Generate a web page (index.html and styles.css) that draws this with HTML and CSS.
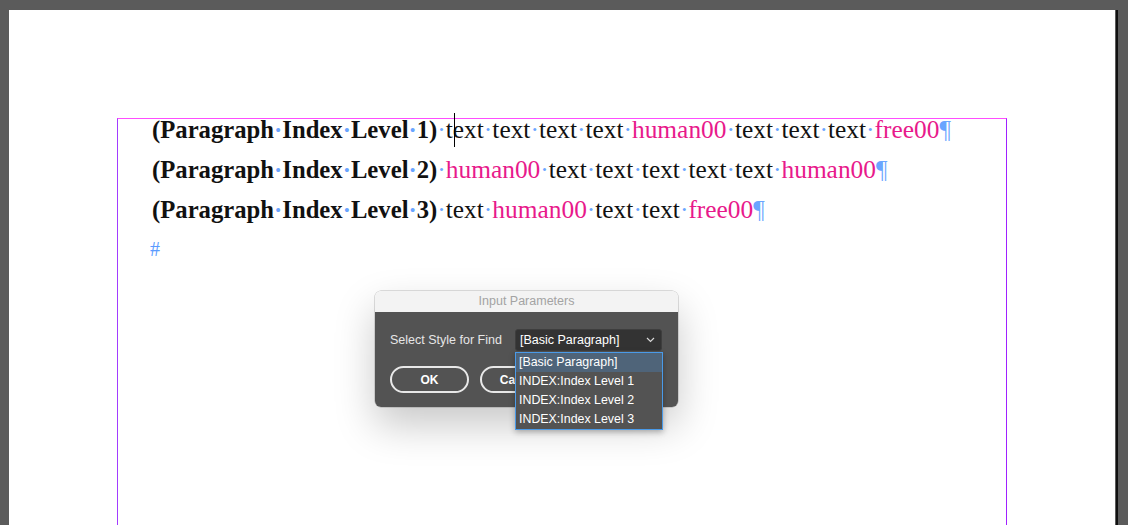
FILE: index.html
```html
<!DOCTYPE html>
<html>
<head>
<meta charset="utf-8">
<link rel="stylesheet" href="styles.css">
</head>
<body>
<div class="page">
  <div class="frame">
    <div class="story">
      <p class="para"><b>(Paragraph<span class="sp">·</span>Index<span class="sp">·</span>Level<span class="sp">·</span>1)</b><span class="sp">·</span>text<span class="sp">·</span>text<span class="sp">·</span>text<span class="sp">·</span>text<span class="sp">·</span><span class="pk">human00</span><span class="sp">·</span>text<span class="sp">·</span>text<span class="sp">·</span>text<span class="sp">·</span><span class="pk">free00</span><span class="pil">¶</span></p>
      <p class="para"><b>(Paragraph<span class="sp">·</span>Index<span class="sp">·</span>Level<span class="sp">·</span>2)</b><span class="sp">·</span><span class="pk">human00</span><span class="sp">·</span>text<span class="sp">·</span>text<span class="sp">·</span>text<span class="sp">·</span>text<span class="sp">·</span>text<span class="sp">·</span><span class="pk">human00</span><span class="pil">¶</span></p>
      <p class="para"><b>(Paragraph<span class="sp">·</span>Index<span class="sp">·</span>Level<span class="sp">·</span>3)</b><span class="sp">·</span>text<span class="sp">·</span><span class="pk">human00</span><span class="sp">·</span>text<span class="sp">·</span>text<span class="sp">·</span><span class="pk">free00</span><span class="pil">¶</span></p>
      <p class="para end">#</p>
    </div>
    <div class="caret"></div>
  </div>

  <div class="dialog">
    <div class="dlg-title">Input Parameters</div>
    <div class="dlg-body">
      <div class="row">
        <span class="label">Select Style for Find</span>
        <div class="select">
          <span>[Basic Paragraph]</span>
          <svg class="chev" width="9" height="6" viewBox="0 0 9 6"><path d="M1 1 L4.5 4.5 L8 1" fill="none" stroke="#d8d8d8" stroke-width="1.2"/></svg>
        </div>
      </div>
      <div class="buttons">
        <div class="btn">OK</div>
        <div class="btn">Cancel</div>
      </div>
    </div>
    <ul class="menu">
      <li class="sel">[Basic Paragraph]</li>
      <li>INDEX:Index Level 1</li>
      <li>INDEX:Index Level 2</li>
      <li>INDEX:Index Level 3</li>
    </ul>
  </div>
</div>
</body>
</html>
```

FILE: styles.css
```css
html, body {
  margin: 0;
  padding: 0;
  height: 100%;
  overflow: hidden;
}
body {
  background: #5b5b5b;
  padding: 10px 0 0 9px;
  box-sizing: border-box;
}
.page {
  position: relative;
  width: 1106px;
  height: 515px;
  background: #ffffff;
  box-shadow: 1px 0 0 #5b5b5b, 3px 0 0 #111111;
  padding: 108px 0 0 108px;
  box-sizing: border-box;
}
.frame {
  position: relative;
  width: 890px;
  height: 407px;
  border-top: 1px solid #ff4dff;
  border-left: 1px solid #a23cff;
  border-right: 1px solid #a020ff;
  box-sizing: border-box;
}
.story {
  margin-top: -10px;
  padding-left: 34px;
  font-family: "Liberation Serif", serif;
  font-size: 25.4px;
  color: #111111;
}
.para {
  margin: 0;
  height: 40px;
  line-height: 40px;
  white-space: nowrap;
}
.para b {
  font-weight: bold;
  font-size: 24.7px;
  line-height: 40px;
}
.sp {
  color: #6aa5ff;
}
.pk {
  color: #e8198b;
}
.pil {
  color: #6aa5ff;
}
.end {
  color: #5b9bff;
  font-size: 20px;
  margin-left: -2px;
}
.caret {
  position: absolute;
  left: 336px;
  top: -6px;
  width: 1px;
  height: 34px;
  background: #000;
}
.dialog {
  position: absolute;
  left: 366px;
  top: 281px;
  width: 303px;
  border-radius: 6px;
  box-shadow: 0 18px 40px rgba(0,0,0,0.22), 0 0 0 0.5px rgba(0,0,0,0.25);
  font-family: "Liberation Sans", "DejaVu Sans", sans-serif;
  font-size: 12px;
}
.dlg-title {
  height: 21px;
  line-height: 21px;
  background: #f3f3f3;
  color: #a3a3a3;
  text-align: center;
  border-radius: 6px 6px 0 0;
  font-size: 12.5px;
}
.dlg-body {
  background: #535353;
  height: 95px;
  border-radius: 0 0 6px 6px;
  padding: 17px 0 0 15px;
  box-sizing: border-box;
}
.row {
  display: flex;
  align-items: center;
  gap: 10px;
}
.label {
  color: #e6e6e6;
  width: 115px;
  font-size: 12.5px;
}
.select {
  width: 147px;
  height: 22px;
  background: #333333;
  border: 1px solid #3e3e3e;
  border-radius: 3px;
  box-sizing: border-box;
  display: flex;
  align-items: center;
  justify-content: space-between;
  padding: 0 6px 0 4px;
  color: #ffffff;
  font-size: 12.5px;
}
.buttons {
  display: flex;
  gap: 11px;
  margin-top: 15px;
}
.btn {
  width: 79px;
  height: 27px;
  box-sizing: border-box;
  border: 2px solid #e8e8e8;
  border-radius: 14px;
  color: #ffffff;
  font-weight: bold;
  display: flex;
  align-items: center;
  justify-content: center;
}
.menu {
  position: absolute;
  left: 140px;
  top: 61px;
  width: 148px;
  margin: 0;
  padding: 0;
  list-style: none;
  background: #535353;
  border: 1px solid #4a9ae8;
  box-sizing: border-box;
  box-shadow: 0 2px 6px rgba(0,0,0,0.3);
  font-size: 12.4px;
}
.menu li {
  height: 19px;
  line-height: 19px;
  padding-left: 3px;
  color: #ffffff;
}
.menu li.sel {
  background: #4f6479;
}
```
